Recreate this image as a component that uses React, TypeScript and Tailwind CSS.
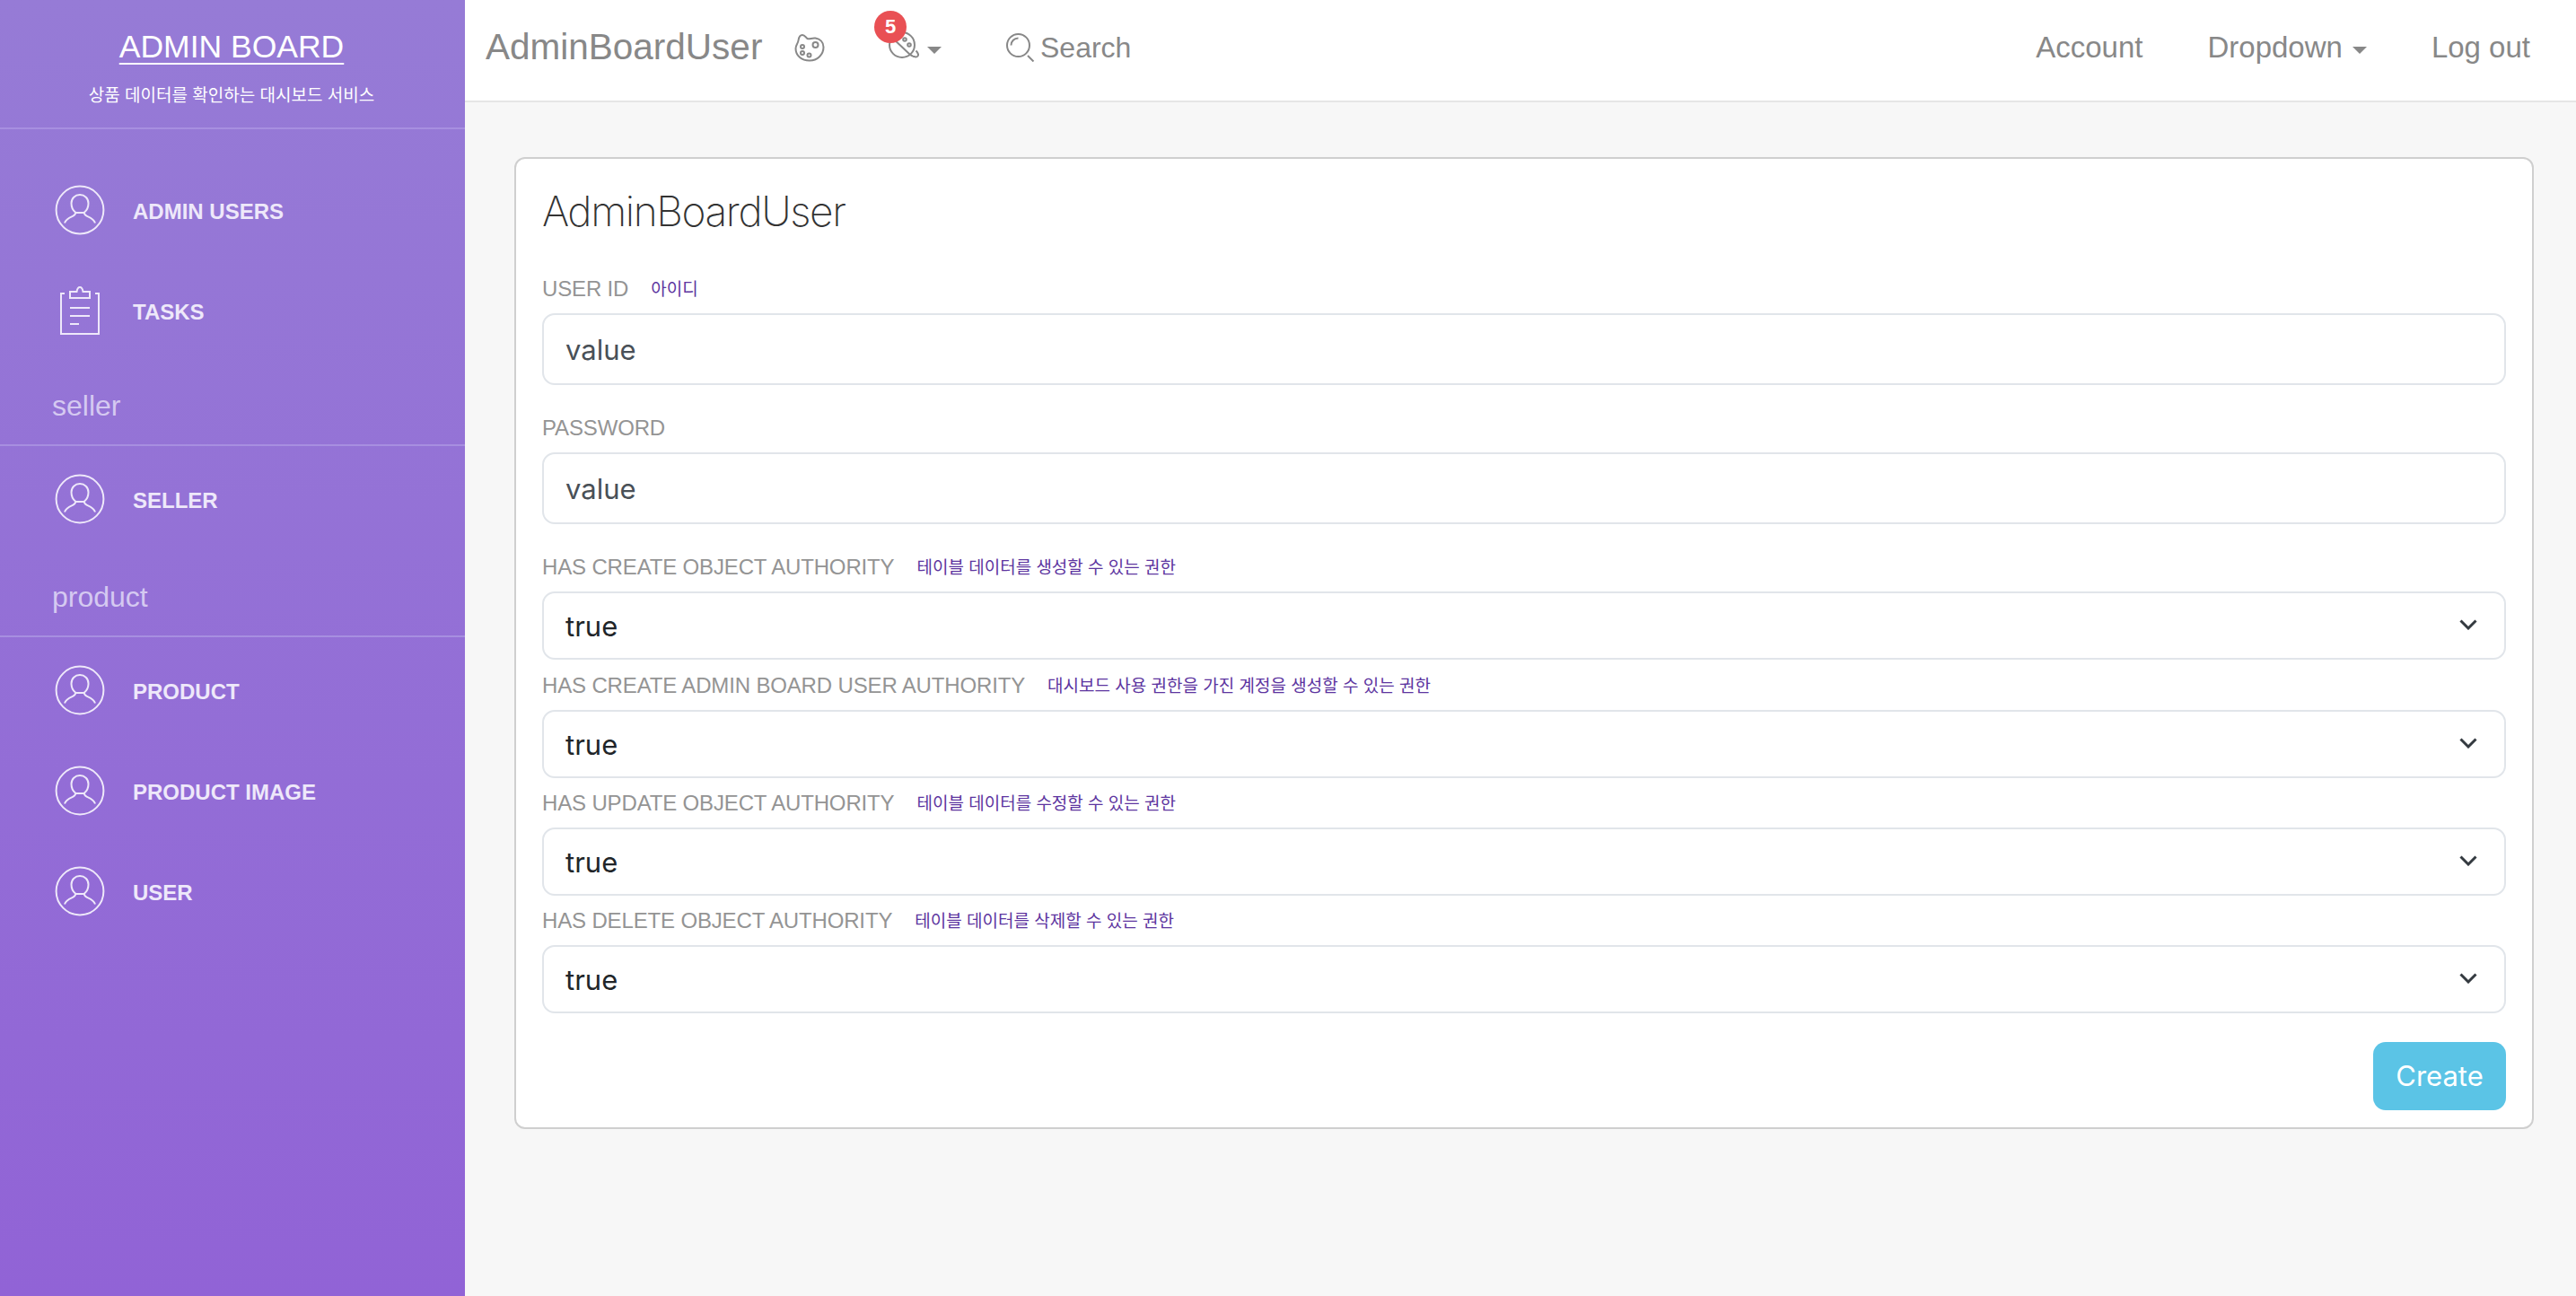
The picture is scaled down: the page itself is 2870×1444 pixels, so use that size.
import React from "react";

const sans = "font-['Liberation_Sans',Arial,'Noto_Sans_CJK_KR',sans-serif]";

function UserIcon() {
  return (
    <svg width="56" height="56" viewBox="0 0 56 56" fill="none" stroke="currentColor" strokeWidth="2" className="text-[#eee8fa]">
      <circle cx="28" cy="28" r="26.4" />
      <path d="M28 11c-5.400 0-9.500 4-9.500 9.500 0 4.500 1.800 8 4.700 10.300 0 2-.9 3-3.200 4-3.700 1.600-7.700 3.100-9 7.700" />
      <path d="M28 11c5.400 0 9.500 4 9.500 9.500 0 4.500-1.800 8-4.700 10.300 0 2 .9 3 3.200 4 3.700 1.600 7.700 3.100 9 7.700" />
      <path d="M23.200 31h9.600" />
    </svg>
  );
}

function ClipboardIcon() {
  return (
    <svg width="44" height="54" viewBox="0 0 44 54" fill="none" stroke="currentColor" strokeWidth="2" className="text-[#eee8fa]">
      <path d="M5 8H1v45h42V8h-4" />
      <path d="M11 13V6h7.500c.5-3 1.800-5 3.500-5s3 2 3.500 5H33v7z" />
      <path d="M11 24h22M11 33h22M11 42h10" />
    </svg>
  );
}

function PaletteIcon() {
  return (
    <svg width="34" height="32" viewBox="0 0 34 32" fill="none" stroke="#888" strokeWidth="2">
      <path d="M9 2c3 0 3.500 3 5.500 4 2.500 1.200 5-1.200 9-.5 5 .9 9 4.500 9 10 0 8.500-7 15-15.500 15C8 30.500 1.500 25 1.500 17 1.500 13 4 12 4.500 8 5 4.500 6 2 9 2z" />
      <circle cx="23.500" cy="13" r="3" />
      <circle cx="9" cy="15" r="2" />
      <circle cx="9" cy="22" r="2" />
      <circle cx="16.500" cy="24.500" r="2" />
    </svg>
  );
}

function PlanetIcon() {
  return (
    <svg width="34" height="32" viewBox="0 0 34 32" fill="none" stroke="#888" strokeWidth="2">
      <circle cx="15" cy="15" r="14" />
      <path d="M3 6l20 19c3 2.800 8 4.500 9.500 2.500 1.200-1.600-.5-4.500-2-6" />
      <circle cx="18" cy="9" r="1.800" />
      <circle cx="23" cy="15" r="1.800" />
    </svg>
  );
}

function SearchIcon() {
  return (
    <svg width="32" height="32" viewBox="0 0 32 32" fill="none" stroke="#888" strokeWidth="2">
      <circle cx="13.500" cy="13.500" r="12.500" />
      <path d="M5.500 13.500c0-4.500 3.500-8 8-8" />
      <path d="M24 25l6.500 6.500" />
    </svg>
  );
}

function Caret() {
  return <span className="block w-0 h-0 border-x-[8px] border-x-transparent border-t-[8px] border-t-[#888]" />;
}

function NavRow({ label, icon }: { label: string; icon?: React.ReactNode }) {
  return (
    <div className="h-[112px] flex items-center">
      <div className="w-[148px] pl-[61px] flex justify-start">{icon ?? <UserIcon />}</div>
      <span className="mt-[3px] text-[24px] font-bold text-[#eee8fa]">{label}</span>
    </div>
  );
}

function SectionLabel({ label, className }: { label: string; className: string }) {
  return (
    <div className={`border-b-2 border-[#a78fe0] flex items-end pb-[23px] pl-[58px] mb-[3px] ${className}`}>
      <span className="text-[32px] leading-[40px] font-light text-[#d5c9f1]">{label}</span>
    </div>
  );
}

function FieldLabel({ label, hint }: { label: string; hint?: string }) {
  return (
    <div className="h-[30px] pt-[2px] flex items-center gap-[25px]">
      <span className="text-[24px] tracking-[-0.15px] text-[#949494]">{label}</span>
      {hint && <span className="mt-[2px] text-[19px] text-[#5d35a0]">{hint}</span>}
    </div>
  );
}

function TextField({ label, hint }: { label: string; hint?: string }) {
  return (
    <div>
      <FieldLabel label={label} hint={hint} />
      <input
        readOnly
        value="value"
        className="mt-[13px] w-full h-[80px] px-[24px] border-2 border-[#e1e5ea] rounded-[14px] bg-white text-[31px] text-[#495057] font-['Inter',sans-serif] outline-none"
      />
    </div>
  );
}

function SelectField({ label, hint }: { label: string; hint?: string }) {
  return (
    <div>
      <FieldLabel label={label} hint={hint} />
      <div className="relative mt-[13px]">
        <select className="block w-full h-[76px] pl-[24px] pr-[60px] pt-[2px] border-2 border-[#e1e5ea] rounded-[14px] bg-white text-[31px] text-[#212529] font-['Inter',sans-serif] appearance-none outline-none">
          <option>true</option>
        </select>
        <svg width="20" height="12" viewBox="0 0 20 12" fill="none" stroke="#343a40" strokeWidth="3" className="absolute right-[32px] top-[31px] pointer-events-none">
          <path d="M1.500 1.500L10 10l8.500-8.500" />
        </svg>
      </div>
    </div>
  );
}

export default function App() {
  return (
    <div className={`flex min-h-[1444px] bg-[#f7f7f7] ${sans}`}>
      <aside className="w-[518px] shrink-0 bg-gradient-to-b from-[#967bd6] to-[#9163d6] text-white">
        <div className="h-[144px] border-b-2 border-[#a78fe0] flex flex-col items-center pr-[2px]">
          <div className="mt-[30px] text-[35.500px] leading-[44px] underline underline-offset-[6px] decoration-2">ADMIN BOARD</div>
          <div className="mt-[20px] text-[19px] leading-[26px]">상품 데이터를 확인하는 대시보드 서비스</div>
        </div>
        <div className="pt-[34px]">
          <NavRow label="ADMIN USERS" />
          <NavRow label="TASKS" icon={<div className="pl-[6px]"><ClipboardIcon /></div>} />
          <SectionLabel label="seller" className="h-[95px]" />
          <NavRow label="SELLER" />
          <SectionLabel label="product" className="h-[98px]" />
          <NavRow label="PRODUCT" />
          <NavRow label="PRODUCT IMAGE" />
          <NavRow label="USER" />
        </div>
      </aside>

      <div className="flex-1 min-w-0">
        <header className="h-[114px] pb-[7px] bg-white border-b-2 border-[#e6e6e6] flex items-center justify-between pl-[23px] pr-[51px] text-[#888]">
          <div className="flex items-center">
            <span className="text-[40.500px] w-[344px]">AdminBoardUser</span>
            <PaletteIcon />
            <div className="relative ml-[71px] flex items-center gap-[9px]">
              <div className="-mt-[4px]"><PlanetIcon /></div>
              <div className="mt-[7px]"><Caret /></div>
              <span className="absolute -left-[16px] -top-[27px] w-[36px] h-[36px] rounded-full bg-[#e95054] text-white text-[22px] font-bold flex items-center justify-center">5</span>
            </div>
            <div className="ml-[72px] flex items-center gap-[6px]">
              <SearchIcon />
              <span className="text-[32px]">Search</span>
            </div>
          </div>
          <div className="flex items-center text-[33px]">
            <span>Account</span>
            <span className="ml-[72px]">Dropdown</span>
            <span className="ml-[11px] mt-[7px]"><Caret /></span>
            <span className="ml-[72px]">Log out</span>
          </div>
        </header>

        <main className="pt-[61px] pl-[55px] pr-[47px]">
          <section className="h-[1083px] bg-white border-2 border-[#cfcfcf] rounded-[12px] px-[29px]">
            <h1 className="pt-[30px] h-[129px] text-[46px] leading-[56px] font-extralight tracking-[-1.400px] text-[#333] font-['Inter',sans-serif]">AdminBoardUser</h1>
            <div className="flex flex-col">
              <TextField label="USER ID" hint="아이디" />
              <div className="mt-[32px]"><TextField label="PASSWORD" /></div>
              <div className="mt-[32px]"><SelectField label="HAS CREATE OBJECT AUTHORITY" hint="테이블 데이터를 생성할 수 있는 권한" /></div>
              <div className="mt-[13px]"><SelectField label="HAS CREATE ADMIN BOARD USER AUTHORITY" hint="대시보드 사용 권한을 가진 계정을 생성할 수 있는 권한" /></div>
              <div className="mt-[12px]"><SelectField label="HAS UPDATE OBJECT AUTHORITY" hint="테이블 데이터를 수정할 수 있는 권한" /></div>
              <div className="mt-[12px]"><SelectField label="HAS DELETE OBJECT AUTHORITY" hint="테이블 데이터를 삭제할 수 있는 권한" /></div>
            </div>
            <div className="mt-[32px] flex justify-end">
              <button className="w-[148px] h-[76px] rounded-[14px] bg-[#5bc4e6] text-white text-[31px] font-['Inter',sans-serif]">Create</button>
            </div>
          </section>
        </main>
      </div>
    </div>
  );
}
